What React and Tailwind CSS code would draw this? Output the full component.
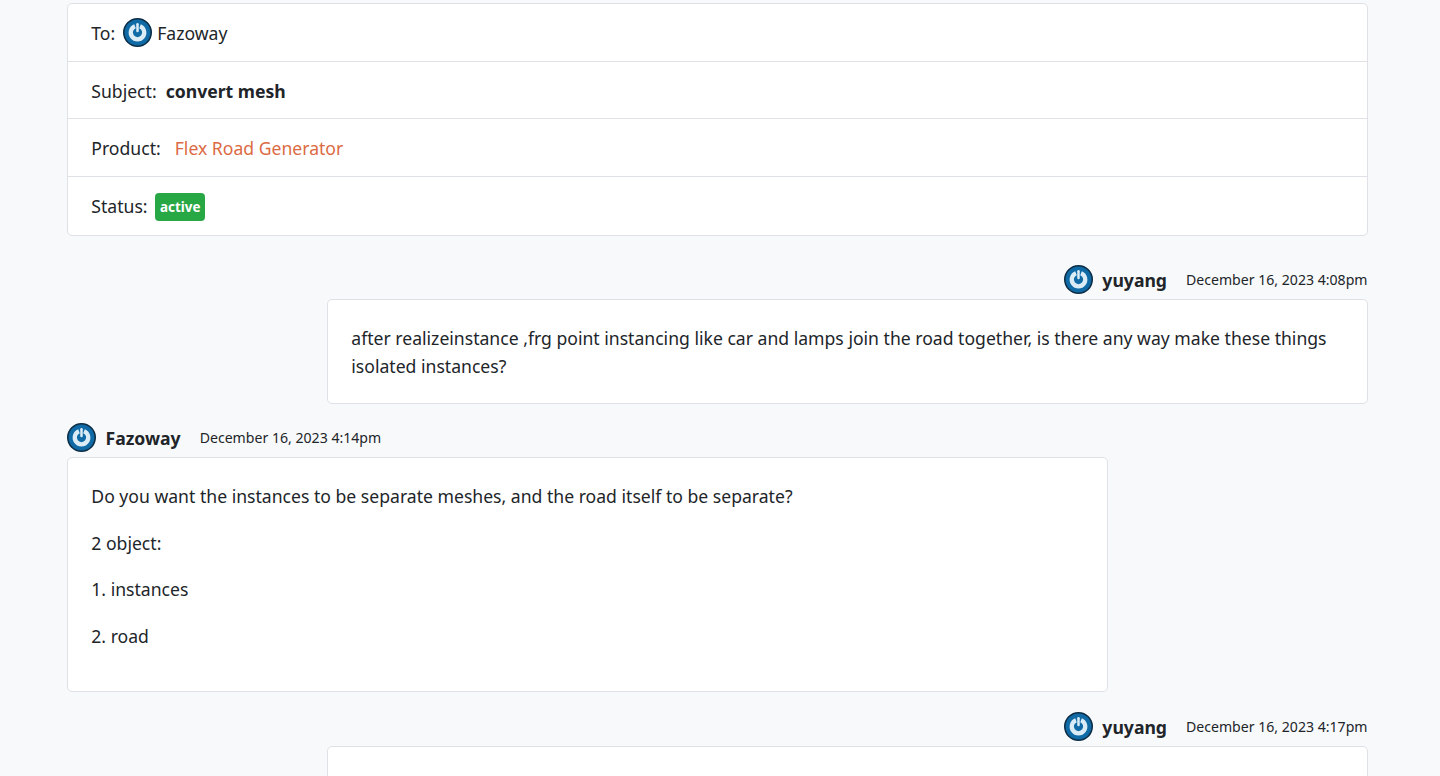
import React from 'react';

const Avatar = () => (
  <svg width="29" height="29" viewBox="0 0 30 30" className="shrink-0 block">
    <circle cx="15" cy="15" r="14.2" fill="#0f6aa6" stroke="#0c2d45" strokeWidth="1.6" />
    <path d="M12.4 8.5a7 7 0 1 0 5.2 0" fill="none" stroke="#dcecf7" strokeWidth="4.4" />
    <path d="M15 6.5v7" fill="none" stroke="#dcecf7" strokeWidth="2.6" strokeLinecap="round" />
  </svg>
);

const Row = ({ children, last }) => (
  <div className={`flex items-center px-[23.3px] text-[17.6px] leading-[28px] ${last ? 'py-[14px]' : 'pt-[15.25px] pb-[13.25px] border-b border-[#dee2e6]'}`}>
    {children}
  </div>
);

const MessageHead = ({ name, date, right }) => (
  <div className={`flex items-center h-[29px] mb-[5px] ${right ? 'justify-end' : ''}`}>
    <Avatar />
    <span className="ml-[9.5px] pt-[1px] font-bold text-[17.6px] leading-[28px]">{name}</span>
    <span className="ml-[19px] pt-[1px] text-[14.1px] leading-[28px]">{date}</span>
  </div>
);

const Card = ({ children, right, className = '' }) => (
  <div className={`w-[1040.5px] bg-white border border-[#dee2e6] rounded-[5px] px-[23.3px] pt-[24.5px] pb-[22.5px] text-[17.6px] leading-[28px] ${right ? 'ml-auto' : ''} ${className}`}>
    {children}
  </div>
);

export default function App() {
  return (
    <div className="h-[776px] overflow-hidden bg-[#f8f9fa] text-[#212529] font-['Noto_Sans','Open_Sans',sans-serif]">
      <div className="w-[1300.5px] ml-[67px] pt-[3px]">
        <div className="bg-white border border-[#dee2e6] rounded-[5px]">
          <Row>
            <span>To:</span>
            <span className="ml-[8px] -mt-[2px] -mb-px"><Avatar /></span>
            <span className="ml-[5px]">Fazoway</span>
          </Row>
          <Row>
            <span>Subject:</span>
            <span className="ml-[9px] font-bold">convert mesh</span>
          </Row>
          <Row>
            <span>Product:</span>
            <a className="ml-[14px] text-[#db6a43]">Flex Road Generator</a>
          </Row>
          <Row last>
            <span>Status:</span>
            <span className="ml-[7.5px] mt-[2px] h-[28px] flex items-center bg-[#28a745] text-white font-bold text-[13.4px] px-[5px] rounded-[4px]">active</span>
          </Row>
        </div>

        <div className="mt-[29px]">
          <MessageHead right name="yuyang" date="December 16, 2023 4:08pm" />
          <Card right>
            after realizeinstance ,frg point instancing like car and lamps join the road together, is there any way make these things isolated instances?
          </Card>
        </div>

        <div className="mt-[19px]">
          <MessageHead name="Fazoway" date="December 16, 2023 4:14pm" />
          <Card>
            <p className="mb-[18.67px]">Do you want the instances to be separate meshes, and the road itself to be separate?</p>
            <p className="mb-[18.67px]">2 object:</p>
            <p className="mb-[18.67px]">1. instances</p>
            <p className="mb-[18.67px]">2. road</p>
          </Card>
        </div>

        <div className="mt-[19.5px]">
          <MessageHead right name="yuyang" date="December 16, 2023 4:17pm" />
          <Card right className="h-[200px]" />
        </div>
      </div>
    </div>
  );
}
